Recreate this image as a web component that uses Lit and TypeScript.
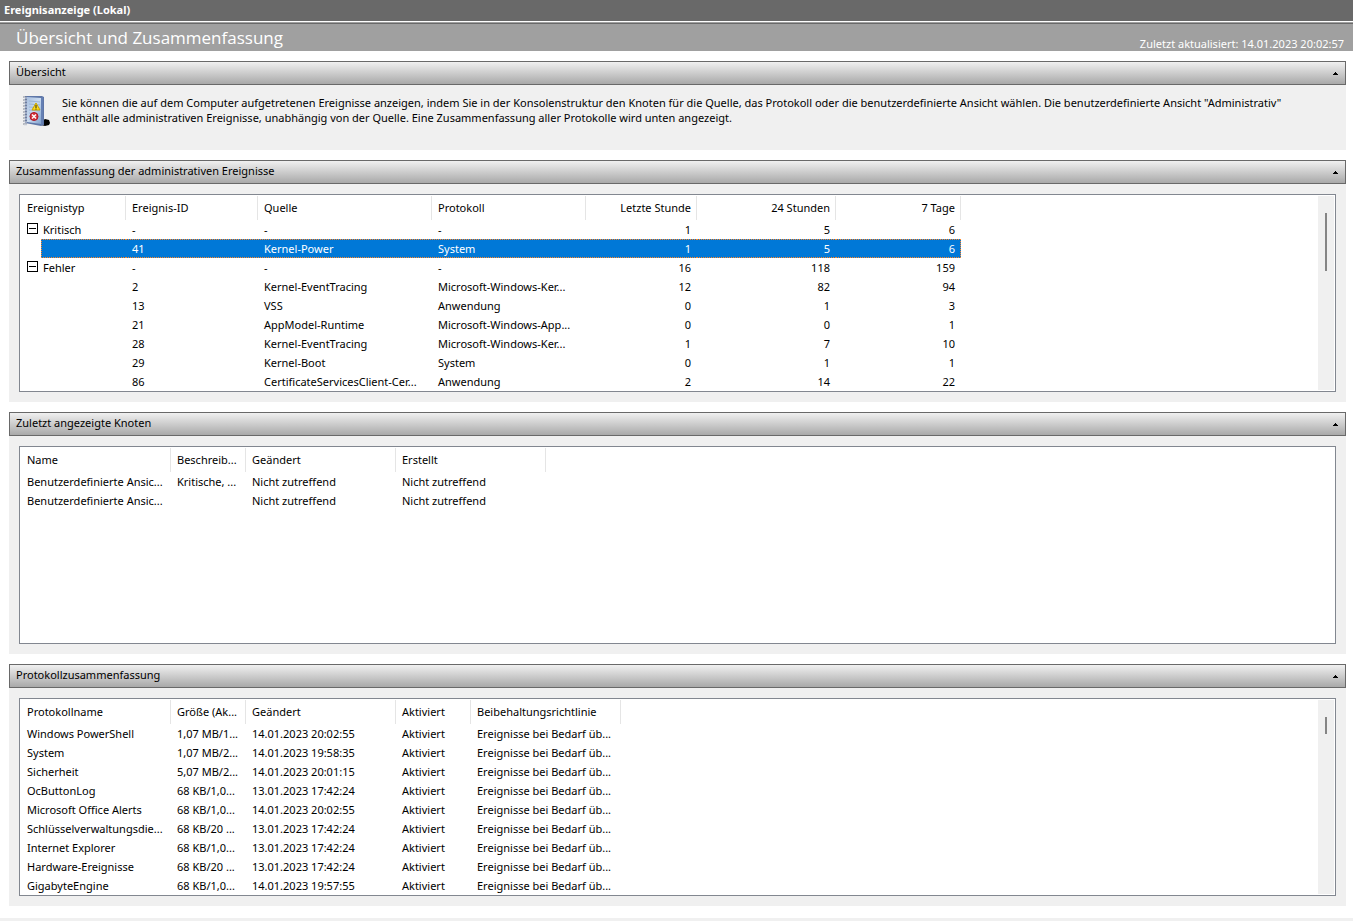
import { LitElement, html, css, svg, nothing } from "lit";
import { customElement, property, state } from "lit/decorators.js";
import { classMap } from "lit/directives/class-map.js";

interface Column {
  label: string;
  width: number;
  numeric?: boolean;
}

interface Row {
  cells: string[];
  group?: boolean;
  selected?: boolean;
}

const group = (...cells: string[]): Row => ({ cells, group: true });
const row = (...cells: string[]): Row => ({ cells });

const EVENT_COLUMNS: Column[] = [
  { label: "Ereignistyp", width: 105 },
  { label: "Ereignis-ID", width: 132 },
  { label: "Quelle", width: 174 },
  { label: "Protokoll", width: 154 },
  { label: "Letzte Stunde", width: 111, numeric: true },
  { label: "24 Stunden", width: 139, numeric: true },
  { label: "7 Tage", width: 125, numeric: true },
];

const EVENT_ROWS: Row[] = [
  group("Kritisch", "-", "-", "-", "1", "5", "6"),
  { cells: ["", "41", "Kernel-Power", "System", "1", "5", "6"], selected: true },
  group("Fehler", "-", "-", "-", "16", "118", "159"),
  row("", "2", "Kernel-EventTracing", "Microsoft-Windows-Ker...", "12", "82", "94"),
  row("", "13", "VSS", "Anwendung", "0", "1", "3"),
  row("", "21", "AppModel-Runtime", "Microsoft-Windows-App...", "0", "0", "1"),
  row("", "28", "Kernel-EventTracing", "Microsoft-Windows-Ker...", "1", "7", "10"),
  row("", "29", "Kernel-Boot", "System", "0", "1", "1"),
  row("", "86", "CertificateServicesClient-Cer...", "Anwendung", "2", "14", "22"),
];

const NODE_COLUMNS: Column[] = [
  { label: "Name", width: 150 },
  { label: "Beschreib...", width: 75 },
  { label: "Geändert", width: 150 },
  { label: "Erstellt", width: 150 },
];

const NODE_ROWS: Row[] = [
  row("Benutzerdefinierte Ansic...", "Kritische, ...", "Nicht zutreffend", "Nicht zutreffend"),
  row("Benutzerdefinierte Ansic...", "", "Nicht zutreffend", "Nicht zutreffend"),
];

const LOG_COLUMNS: Column[] = [
  { label: "Protokollname", width: 150 },
  { label: "Größe (Ak...", width: 75 },
  { label: "Geändert", width: 150 },
  { label: "Aktiviert", width: 75 },
  { label: "Beibehaltungsrichtlinie", width: 150 },
];

const log = (name: string, size: string, changed: string): Row =>
  row(name, size, changed, "Aktiviert", "Ereignisse bei Bedarf üb...");

const LOG_ROWS: Row[] = [
  log("Windows PowerShell", "1,07 MB/1...", "14.01.2023 20:02:55"),
  log("System", "1,07 MB/2...", "14.01.2023 19:58:35"),
  log("Sicherheit", "5,07 MB/2...", "14.01.2023 20:01:15"),
  log("OcButtonLog", "68 KB/1,0...", "13.01.2023 17:42:24"),
  log("Microsoft Office Alerts", "68 KB/1,0...", "14.01.2023 20:02:55"),
  log("Schlüsselverwaltungsdie...", "68 KB/20 ...", "13.01.2023 17:42:24"),
  log("Internet Explorer", "68 KB/1,0...", "13.01.2023 17:42:24"),
  log("Hardware-Ereignisse", "68 KB/20 ...", "13.01.2023 17:42:24"),
  log("GigabyteEngine", "68 KB/1,0...", "14.01.2023 19:57:55"),
];

/** Collapsible section: gradient title bar over a light grey panel. */
@customElement("summary-section")
export class SummarySection extends LitElement {
  @property() heading = "";
  @state() private open = true;

  static styles = css`
    :host {
      display: block;
      background: #f0f0f0;
    }
    .heading {
      margin: 0;
      font: inherit;
    }
    .bar {
      display: flex;
      align-items: center;
      justify-content: space-between;
      box-sizing: border-box;
      width: 100%;
      height: 24px;
      padding: 0 7px 3px 6px;
      border: 1px solid #696969;
      background: linear-gradient(#f0f0f0, #a9a9a9);
      color: #000;
      font: inherit;
      text-align: left;
    }
    .arrow {
      display: block;
      margin-top: 3px;
    }
    .arrow.closed {
      transform: scaleY(-1);
    }
    .content {
      padding: 10px;
    }
  `;

  render() {
    return html`
      <h2 class="heading">
        <button class="bar" aria-expanded=${this.open} @click=${() => (this.open = !this.open)}>
          <span>${this.heading}</span>
          <svg class=${classMap({ arrow: true, closed: !this.open })} width="5" height="3" aria-hidden="true" shape-rendering="crispEdges">
            <path d="M2 0h1v1h1v1h1v1H0V2h1V1h1z" />
          </svg>
        </button>
      </h2>
      ${this.open ? html`<div class="content"><slot></slot></div>` : nothing}
    `;
  }
}

/** Bordered list view with column headers, tree groups and an optional scroll bar. */
@customElement("list-view")
export class ListView extends LitElement {
  @property() label = "";
  @property({ attribute: false }) columns: Column[] = [];
  @property({ attribute: false }) rows: Row[] = [];
  @property({ type: Number }) thumb = 0;

  static styles = css`
    :host {
      display: flex;
      box-sizing: border-box;
      height: 198px;
      padding: 1px;
      border: 1px solid #828790;
      background: #fff;
    }
    .view {
      flex: 1;
      min-width: 0;
      overflow: hidden;
    }
    .track {
      flex: none;
      box-sizing: border-box;
      width: 16px;
      padding: 17px 7px;
      background: #f0f0f0;
    }
    .thumb {
      width: 2px;
      background: #858585;
    }
    table {
      table-layout: fixed;
      width: 0;
      border-spacing: 0;
    }
    th,
    td {
      box-sizing: border-box;
      padding: 0 6px;
      font-weight: normal;
      text-align: left;
      white-space: nowrap;
      overflow: hidden;
    }
    th {
      height: 24px;
      padding: 0 5px 2px 6px;
      border-right: 1px solid #e5e5e5;
    }
    td {
      height: 19px;
      line-height: 17px;
    }
    .numeric {
      text-align: right;
    }
    .tree {
      padding: 0;
    }
    .node {
      display: flex;
      align-items: center;
      gap: 5px;
      padding-left: 6px;
    }
    .toggle {
      display: block;
      padding: 0 0 2px;
      border: 0;
      background: none;
    }
    .toggle svg {
      display: block;
    }
    .selected {
      color: #fff;
    }
    .selected td:not(.tree),
    .fill {
      --dots: repeating-linear-gradient(90deg, #ff8728 0 1px, #0078d7 1px 2px);
      --side: repeating-linear-gradient(#ff8728 0 1px, #0078d7 1px 2px);
      background:
        var(--dots) top / 100% 1px no-repeat,
        var(--dots) bottom / 100% 1px no-repeat,
        #0078d7;
    }
    .selected td.numeric:last-child {
      background:
        var(--side) right / 1px 100% no-repeat,
        var(--dots) top / 100% 1px no-repeat,
        var(--dots) bottom / 100% 1px no-repeat,
        #0078d7;
    }
    .fill {
      height: 19px;
      margin-left: 20px;
      background:
        var(--side) left / 1px 100% no-repeat,
        var(--dots) top / 100% 1px no-repeat,
        var(--dots) bottom / 100% 1px no-repeat,
        #0078d7;
    }
  `;

  private cell(r: Row, text: string, i: number) {
    const tree = i === 0 && (r.group || r.selected);
    return html`<td class=${classMap({ numeric: !!this.columns[i].numeric, tree: !!tree })}>${
      i === 0 && r.group
        ? html`<div class="node">
            <button class="toggle" aria-label="${text} reduzieren">
              <svg width="11" height="11" shape-rendering="crispEdges" aria-hidden="true">
                <rect x=".5" y=".5" width="10" height="10" fill="#fff" stroke="#000" />
                <path d="M2 5.500h7" stroke="#000" />
              </svg>
            </button>
            <span>${text}</span>
          </div>`
        : i === 0 && r.selected
          ? html`<div class="fill"></div>`
          : text
    }</td>`;
  }

  render() {
    return html`
      <div class="view">
        <table aria-label=${this.label}>
          <colgroup>
            ${this.columns.map((c) => html`<col style="width:${c.width}px" />`)}
          </colgroup>
          <thead>
            <tr>
              ${this.columns.map((c) => html`<th scope="col" class=${classMap({ numeric: !!c.numeric })}>${c.label}</th>`)}
            </tr>
          </thead>
          <tbody>
            ${this.rows.map(
              (r) => html`<tr class=${classMap({ selected: !!r.selected })}>
                ${r.cells.map((text, i) => this.cell(r, text, i))}
              </tr>`,
            )}
          </tbody>
        </table>
      </div>
      ${this.thumb ? html`<div class="track"><div class="thumb" style="height:${this.thumb}px"></div></div>` : nothing}
    `;
  }
}

const rings = Array.from({ length: 10 }, (_, i) => 3 + i * 3);

const logIcon = html`
  <svg class="icon" width="28" height="32" viewBox="0 0 28 32" aria-hidden="true">
    <defs>
      <linearGradient id="page" x1="0" y1="0" x2="1" y2="1">
        <stop offset="0" stop-color="#a9c0e0" />
        <stop offset=".5" stop-color="#cbdcf0" />
        <stop offset="1" stop-color="#7e9fcc" />
      </linearGradient>
    </defs>
    <path d="M19 26l3-2 4 1 1 3-1 2-4 1-4-1z" fill="#000" />
    <path d="M2 1h17l2 1v28l-3 1L2 28z" fill="#5f77a8" />
    <path d="M4 2l14 1v26L4 27z" fill="url(#page)" />
    <path d="M18 3l2-1v27l-2 1z" fill="#6580b4" />
    <path d="M6 6l11 1M6 9l11 1M6 12l11 1M6 15l11 1M6 18l11 1M6 21l11 1M6 24l11 2" stroke="#9bb5d8" fill="none" />
    ${rings.map(
      (y) => svg`<path d="M0 ${y - 1}h4" stroke="#7d8494" /><path d="M1 ${y}h3" stroke="#d5d9e2" />`,
    )}
    <path d="M13 8l4 7H9z" fill="#ffdf1c" stroke="#c9a200" stroke-linejoin="round" />
    <path d="M13 10v3M13 13.500v1" stroke="#222" />
    <circle cx="11" cy="21.500" r="4" fill="#d8323a" stroke="#a9182a" />
    <path d="M9 19.500l4 4M13 19.500l-4 4" stroke="#fff" stroke-width="1.400" />
  </svg>
`;

@customElement("app-root")
export class AppRoot extends LitElement {
  static styles = css`
    :host {
      display: flex;
      flex-direction: column;
      min-height: 100vh;
      background: #fff;
      color: #000;
      font: 11px/15px "Noto Sans", "Open Sans", sans-serif;
    }
    .title {
      padding: 2px 4px 4px;
      background: #696969;
      color: #fff;
      font-weight: bold;
    }
    .banner {
      display: flex;
      align-items: flex-end;
      justify-content: space-between;
      margin-top: 1px;
      padding: 0 9px 0 16px;
      border-top: 1px solid #a0a0a0;
      background: linear-gradient(#696969 1px, #a0a0a0 1px);
      color: #fff;
    }
    .banner h1 {
      margin: 0;
      padding: 3px 0 1px;
      font-family: "Open Sans", "Noto Sans", sans-serif;
      font-size: 17px;
      font-weight: 400;
      line-height: 24px;
    }
    .sections {
      flex: 1;
      display: flex;
      flex-direction: column;
      gap: 10px;
      padding: 10px 7px 12px 9px;
    }
    .intro {
      display: flex;
      gap: 11px;
      min-height: 45px;
      padding: 0 32px 0 4px;
    }
    .intro p {
      margin: 0;
    }
    .icon {
      flex: none;
    }
    .footer {
      height: 3px;
      background: #f0f0f0;
    }
  `;

  render() {
    return html`
      <header>
        <div class="title">Ereignisanzeige (Lokal)</div>
        <div class="banner">
          <h1>Übersicht und Zusammenfassung</h1>
          <span>Zuletzt aktualisiert: 14.01.2023 20:02:57</span>
        </div>
      </header>
      <main class="sections">
        <summary-section heading="Übersicht">
          <div class="intro">
            ${logIcon}
            <p>
              Sie können die auf dem Computer aufgetretenen Ereignisse anzeigen, indem Sie in der Konsolenstruktur den Knoten für die Quelle, das Protokoll oder die benutzerdefinierte Ansicht wählen. Die benutzerdefinierte Ansicht "Administrativ" enthält alle administrativen Ereignisse, unabhängig von der Quelle. Eine Zusammenfassung aller Protokolle wird unten angezeigt.
            </p>
          </div>
        </summary-section>
        <summary-section heading="Zusammenfassung der administrativen Ereignisse">
          <list-view label="Administrative Ereignisse" .columns=${EVENT_COLUMNS} .rows=${EVENT_ROWS} thumb="58"></list-view>
        </summary-section>
        <summary-section heading="Zuletzt angezeigte Knoten">
          <list-view label="Zuletzt angezeigte Knoten" .columns=${NODE_COLUMNS} .rows=${NODE_ROWS}></list-view>
        </summary-section>
        <summary-section heading="Protokollzusammenfassung">
          <list-view label="Protokolle" .columns=${LOG_COLUMNS} .rows=${LOG_ROWS} thumb="17"></list-view>
        </summary-section>
      </main>
      <div class="footer"></div>
    `;
  }
}
